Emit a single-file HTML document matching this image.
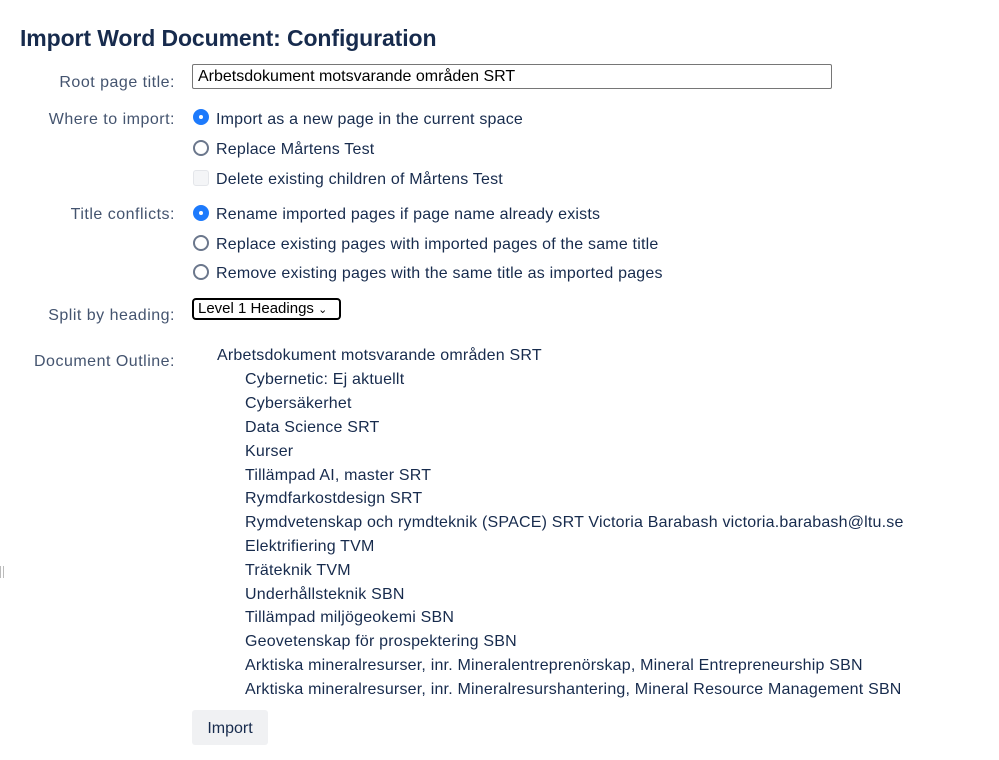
<!DOCTYPE html>
<html><head><meta charset="utf-8"><style>
body{margin:0;width:999px;height:760px;background:#fff;font-family:"Liberation Sans",Arial,sans-serif;color:#172b4d;position:relative;overflow:hidden}
.a{position:absolute;white-space:nowrap}
h1{position:absolute;left:20px;top:25px;margin:0;font-size:23px;font-weight:bold;color:#172b4d;letter-spacing:-0.1px}
.l{position:absolute;right:824px;font-size:16px;color:#44546f;white-space:nowrap;letter-spacing:0.5px}
.t{position:absolute;left:216px;font-size:16px;white-space:nowrap;letter-spacing:0.2px}
.r{position:absolute;left:193px;width:12px;height:12px;border:2px solid #6b778c;border-radius:50%;box-sizing:content-box}
.r.on{border:2px solid #1d7afc;background:#1d7afc}
.r.on::after{content:"";position:absolute;left:4px;top:4px;width:4px;height:4px;border-radius:50%;background:#fff}
.o{position:absolute;font-size:16px;white-space:nowrap;color:#172b4d;letter-spacing:0.2px}
</style></head><body>
<h1>Import Word Document: Configuration</h1>
<div class="l" style="top:74px">Root page title:</div>
<div class="a" style="left:192px;top:64px;height:25px;width:640px;border:1px solid #767676;border-radius:2px;font-size:16px;line-height:23px;padding-left:5px;box-sizing:border-box;color:#000">Arbetsdokument motsvarande områden SRT</div>
<div class="l" style="top:111px">Where to import:</div>
<div class="r on" style="top:109px"></div><div class="t" style="top:111px">Import as a new page in the current space</div>
<div class="r" style="top:140px"></div><div class="t" style="top:141px">Replace Mårtens Test</div>
<div class="a" style="left:193px;top:170px;width:14px;height:14px;border:1px solid #e4e6ea;background:#f4f5f7;border-radius:3px"></div><div class="t" style="top:171px">Delete existing children of Mårtens Test</div>
<div class="l" style="top:206px">Title conflicts:</div>
<div class="r on" style="top:205px"></div><div class="t" style="top:206px">Rename imported pages if page name already exists</div>
<div class="r" style="top:235px"></div><div class="t" style="top:236px">Replace existing pages with imported pages of the same title</div>
<div class="r" style="top:264px"></div><div class="t" style="top:265px">Remove existing pages with the same title as imported pages</div>
<div class="l" style="top:307px">Split by heading:</div>
<div class="a" style="left:192px;top:298px;width:149px;height:22px;border:2px solid #000;border-radius:4px;box-sizing:border-box;font-size:15px;line-height:18px;padding-left:4px;color:#000">Level 1 Headings <span style="font-size:11px">&#8964;</span></div>
<div class="l" style="top:353px">Document Outline:</div>
<div class="o" style="left:217px;top:347px">Arbetsdokument motsvarande områden SRT</div>
<div class="o" style="left:245px;top:371px">Cybernetic: Ej aktuellt</div>
<div class="o" style="left:245px;top:395px">Cybersäkerhet</div>
<div class="o" style="left:245px;top:419px">Data Science SRT</div>
<div class="o" style="left:245px;top:443px">Kurser</div>
<div class="o" style="left:245px;top:467px">Tillämpad AI, master SRT</div>
<div class="o" style="left:245px;top:490px">Rymdfarkostdesign SRT</div>
<div class="o" style="left:245px;top:514px">Rymdvetenskap och rymdteknik (SPACE) SRT Victoria Barabash victoria.barabash@ltu.se</div>
<div class="o" style="left:245px;top:538px">Elektrifiering TVM</div>
<div class="o" style="left:245px;top:562px">Träteknik TVM</div>
<div class="o" style="left:245px;top:586px">Underhållsteknik SBN</div>
<div class="o" style="left:245px;top:609px">Tillämpad miljögeokemi SBN</div>
<div class="o" style="left:245px;top:633px">Geovetenskap för prospektering SBN</div>
<div class="o" style="left:245px;top:657px">Arktiska mineralresurser, inr. Mineralentreprenörskap, Mineral Entrepreneurship SBN</div>
<div class="o" style="left:245px;top:681px">Arktiska mineralresurser, inr. Mineralresurshantering, Mineral Resource Management SBN</div>
<div class="a" style="left:0;top:566px;width:1px;height:12px;background:#bbb"></div>
<div class="a" style="left:3px;top:566px;width:1px;height:12px;background:#bbb"></div>
<div class="a" style="left:192px;top:710px;width:76px;height:35px;background:#f0f1f3;border-radius:3px;font-size:16px;line-height:37px;text-align:center;color:#172b4d">Import</div>
</body></html>
